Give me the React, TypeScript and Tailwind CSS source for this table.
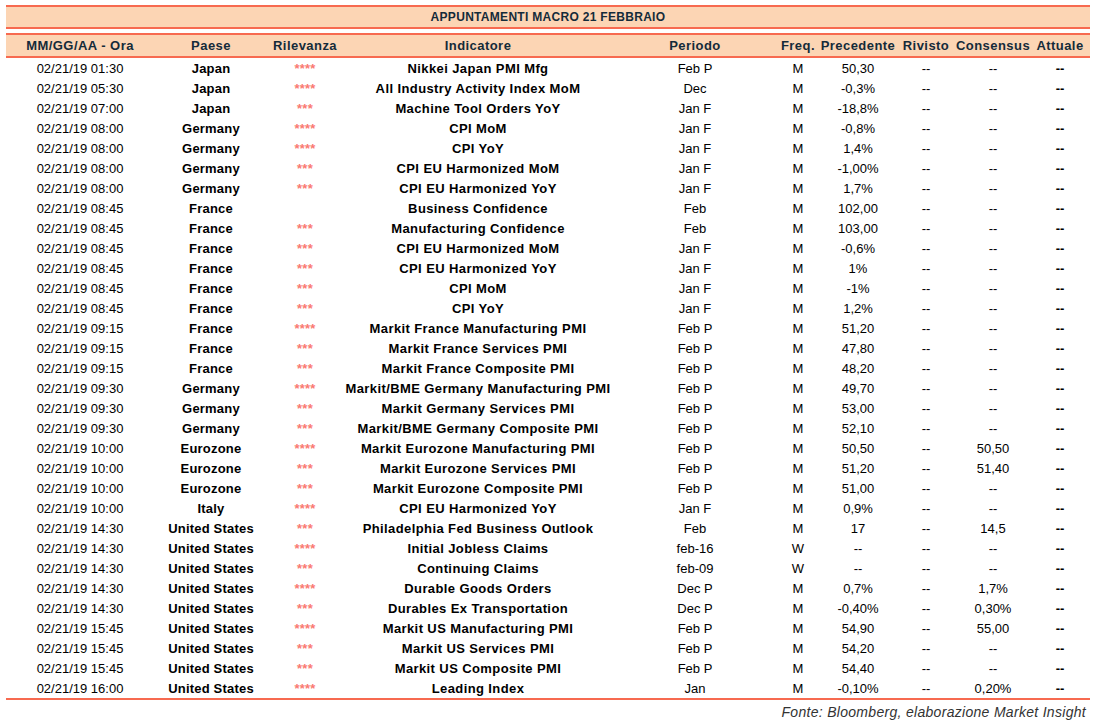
import React from "react";

type Row = [string, string, string, string, string, string, string, string, string];

const rows: Row[] = [
  ["02/21/19 01:30", "Japan", "****", "Nikkei Japan PMI Mfg", "Feb P", "M", "50,30", "--", "--"],
  ["02/21/19 05:30", "Japan", "****", "All Industry Activity Index MoM", "Dec", "M", "-0,3%", "--", "--"],
  ["02/21/19 07:00", "Japan", "***", "Machine Tool Orders YoY", "Jan F", "M", "-18,8%", "--", "--"],
  ["02/21/19 08:00", "Germany", "****", "CPI MoM", "Jan F", "M", "-0,8%", "--", "--"],
  ["02/21/19 08:00", "Germany", "****", "CPI YoY", "Jan F", "M", "1,4%", "--", "--"],
  ["02/21/19 08:00", "Germany", "***", "CPI EU Harmonized MoM", "Jan F", "M", "-1,00%", "--", "--"],
  ["02/21/19 08:00", "Germany", "***", "CPI EU Harmonized YoY", "Jan F", "M", "1,7%", "--", "--"],
  ["02/21/19 08:45", "France", "", "Business Confidence", "Feb", "M", "102,00", "--", "--"],
  ["02/21/19 08:45", "France", "***", "Manufacturing Confidence", "Feb", "M", "103,00", "--", "--"],
  ["02/21/19 08:45", "France", "***", "CPI EU Harmonized MoM", "Jan F", "M", "-0,6%", "--", "--"],
  ["02/21/19 08:45", "France", "***", "CPI EU Harmonized YoY", "Jan F", "M", "1%", "--", "--"],
  ["02/21/19 08:45", "France", "***", "CPI MoM", "Jan F", "M", "-1%", "--", "--"],
  ["02/21/19 08:45", "France", "***", "CPI YoY", "Jan F", "M", "1,2%", "--", "--"],
  ["02/21/19 09:15", "France", "****", "Markit France Manufacturing PMI", "Feb P", "M", "51,20", "--", "--"],
  ["02/21/19 09:15", "France", "***", "Markit France Services PMI", "Feb P", "M", "47,80", "--", "--"],
  ["02/21/19 09:15", "France", "***", "Markit France Composite PMI", "Feb P", "M", "48,20", "--", "--"],
  ["02/21/19 09:30", "Germany", "****", "Markit/BME Germany Manufacturing PMI", "Feb P", "M", "49,70", "--", "--"],
  ["02/21/19 09:30", "Germany", "***", "Markit Germany Services PMI", "Feb P", "M", "53,00", "--", "--"],
  ["02/21/19 09:30", "Germany", "***", "Markit/BME Germany Composite PMI", "Feb P", "M", "52,10", "--", "--"],
  ["02/21/19 10:00", "Eurozone", "****", "Markit Eurozone Manufacturing PMI", "Feb P", "M", "50,50", "--", "50,50"],
  ["02/21/19 10:00", "Eurozone", "***", "Markit Eurozone Services PMI", "Feb P", "M", "51,20", "--", "51,40"],
  ["02/21/19 10:00", "Eurozone", "***", "Markit Eurozone Composite PMI", "Feb P", "M", "51,00", "--", "--"],
  ["02/21/19 10:00", "Italy", "****", "CPI EU Harmonized YoY", "Jan F", "M", "0,9%", "--", "--"],
  ["02/21/19 14:30", "United States", "***", "Philadelphia Fed Business Outlook", "Feb", "M", "17", "--", "14,5"],
  ["02/21/19 14:30", "United States", "****", "Initial Jobless Claims", "feb-16", "W", "--", "--", "--"],
  ["02/21/19 14:30", "United States", "***", "Continuing Claims", "feb-09", "W", "--", "--", "--"],
  ["02/21/19 14:30", "United States", "****", "Durable Goods Orders", "Dec P", "M", "0,7%", "--", "1,7%"],
  ["02/21/19 14:30", "United States", "***", "Durables Ex Transportation", "Dec P", "M", "-0,40%", "--", "0,30%"],
  ["02/21/19 15:45", "United States", "****", "Markit US Manufacturing PMI", "Feb P", "M", "54,90", "--", "55,00"],
  ["02/21/19 15:45", "United States", "***", "Markit US Services PMI", "Feb P", "M", "54,20", "--", "--"],
  ["02/21/19 15:45", "United States", "***", "Markit US Composite PMI", "Feb P", "M", "54,40", "--", "--"],
  ["02/21/19 16:00", "United States", "****", "Leading Index", "Jan", "M", "-0,10%", "--", "0,20%"],
];

const headers = [
  "MM/GG/AA - Ora",
  "Paese",
  "Rilevanza",
  "Indicatore",
  "Periodo",
  "Freq.",
  "Precedente",
  "Rivisto",
  "Consensus",
  "Attuale",
];

const grid =
  "grid grid-cols-[148px_114px_74px_272px_162px_44px_76px_60px_74px_60px]";

export default function App() {
  return (
    <div
      className="w-[1094px] h-[720px] bg-white pt-[5px] pl-[6px]"
      style={{ fontFamily: '"Liberation Sans", Arial, sans-serif' }}
    >
      <div className="w-[1084px]">
        <div className="border-y-2 border-[#f76a50] bg-[#fcd5b4] h-[24px] flex items-center justify-center text-[12px] font-bold text-[#142b3a] tracking-[0.3px]">
          APPUNTAMENTI MACRO 21 FEBBRAIO
        </div>
        <div className="h-[4px]" />
        <div
          className={`${grid} border-y-2 border-[#f76a50] bg-[#fcd5b4] h-[25px] items-center text-[13px] font-bold text-[#142b3a] tracking-[0.45px]`}
        >
          {headers.map((h) => (
            <div key={h} className="text-center whitespace-nowrap">
              {h}
            </div>
          ))}
        </div>
        <div className="border-b-2 border-[#f76a50]">
          {rows.map((r, i) => (
            <div
              key={i}
              className={`${grid} h-[20px] items-center text-[13px] text-black leading-none`}
            >
              <div className="text-center whitespace-nowrap">{r[0]}</div>
              <div className="text-center font-bold whitespace-nowrap tracking-[0.2px]">{r[1]}</div>
              <div className="text-center text-[#fa7a72] text-[13px] font-bold self-start pt-[4px] tracking-[0.2px]">
                {r[2]}
              </div>
              <div className="text-center font-bold whitespace-nowrap tracking-[0.4px]">{r[3]}</div>
              <div className="text-center whitespace-nowrap">{r[4]}</div>
              <div className="text-center">{r[5]}</div>
              <div className="text-center whitespace-nowrap">{r[6]}</div>
              <div className="text-center">{r[7]}</div>
              <div className="text-center whitespace-nowrap">{r[8]}</div>
              <div className="text-center font-bold">--</div>
            </div>
          ))}
        </div>
        <div className="flex justify-end pr-[4px] pt-[2px] text-[14px] italic text-[#333333] tracking-[0.3px]">
          Fonte: Bloomberg, elaborazione Market Insight
        </div>
      </div>
    </div>
  );
}
